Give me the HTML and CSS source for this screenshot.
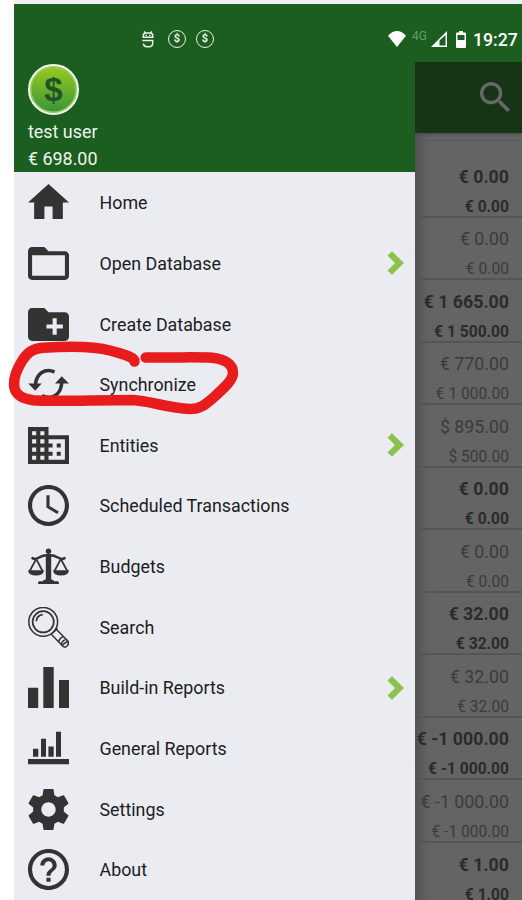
FILE: index.html
```html
<!DOCTYPE html>
<html lang="en">
<head>
<meta charset="utf-8">
<title>Accounts</title>
<link rel="stylesheet" href="styles.css">
</head>
<body>
<div class="screen">
  <div class="statusbar">
    <div class="notices">
      <svg class="notice-face" viewBox="0 0 12 17"><path d="M2 .5l1.500 1.500M10 .5L8.500 2M1.300 6.200V4.500Q1.300 2 4 2h4q2.700 0 2.700 2.500v1.700M.3 6.300h11.400M.3 9.500h10.400v2.500q0 3.700-3.700 3.700H5q-3.300 0-3.700-3" fill="none" stroke="#e9f2e9" stroke-width="1.500"/><path d="M3.500 3.800h1.500v1.300H3.500zM7 3.800h1.500v1.300H7z" fill="#e9f2e9"/></svg>
      <span class="coin">$</span>
      <span class="coin">$</span>
    </div>
    <svg class="wifi" viewBox="0 0 18 16"><path d="M9 16L0 4.800Q4 0 9 0t9 4.800z" fill="#fff"/></svg>
    <span class="net">4G</span>
    <svg class="signal" viewBox="0 0 16 16"><path fill-rule="evenodd" d="M16 0v16H0zM14.500 4L8.500 9.500v5h6z" fill="#fff"/></svg>
    <svg class="battery" viewBox="0 0 10 17"><path fill-rule="evenodd" d="M3 0h4v1.500h2q1 0 1 1V16q0 1-1 1H1q-1 0-1-1V2.500q0-1 1-1h2zM1.500 4v5h7V4z" fill="#fff"/></svg>
    <span class="time">19:27</span>
  </div>
  <div class="body">
    <nav class="drawer">
      <header class="profile">
        <div class="avatar"><span>$</span></div>
        <div class="name">test user</div>
        <div class="total">€ 698.00</div>
      </header>
      <ul class="menu">
        <li><svg class="icon" viewBox="2 2 20 20"><path d="M10 20v-6h4v6h5v-8h3L12 3 2 12h3v8z"/></svg><span>Home</span></li>
        <li><svg class="icon" viewBox="2 2 20 20"><path d="M20 6h-8l-2-2H4c-1.100 0-1.990.900-1.990 2L2 18c0 1.100.900 2 2 2h16c1.100 0 2-.900 2-2V8c0-1.100-.900-2-2-2zm0 12H4V8h16v10z"/></svg><span>Open Database</span><svg class="chevron" viewBox="0 0 17 24"><path d="M.5 4.500L5 .2 17 12 5 23.800.5 19.500 8 12z"/></svg></li>
        <li><svg class="icon" viewBox="2 2 20 20"><path d="M20 6h-8l-2-2H4c-1.110 0-1.990.890-1.990 2L2 18c0 1.110.890 2 2 2h16c1.110 0 2-.890 2-2V8c0-1.110-.890-2-2-2zm-1 8h-3v3h-2v-3h-3v-2h3V9h2v3h3v2z"/></svg><span>Create Database</span></li>
        <li><svg class="icon" viewBox="0 0 41 41"><path d="M26.500 8C17 3.500 8.500 10 7.500 20M14 31.500C24 37 33 30 33.700 19" fill="none" stroke="#333" stroke-width="3.600"/><path d="M.3 19.600h13.400L7.200 26.800zM27 19.500h14l-7.300-7.200z"/></svg><span>Synchronize</span></li>
        <li><svg class="icon" viewBox="2 2 20 20"><path d="M12 7V3H2v18h20V7H12zM6 19H4v-2h2v2zm0-4H4v-2h2v2zm0-4H4V9h2v2zm0-4H4V5h2v2zm4 12H8v-2h2v2zm0-4H8v-2h2v2zm0-4H8V9h2v2zm0-4H8V5h2v2zm10 12h-8v-2h2v-2h-2v-2h2v-2h-2V9h8v10zm-2-8h-2v2h2v-2zm0 4h-2v2h2v-2z"/></svg><span>Entities</span><svg class="chevron" viewBox="0 0 17 24"><path d="M.5 4.500L5 .2 17 12 5 23.800.5 19.500 8 12z"/></svg></li>
        <li><svg class="icon" viewBox="2 2 20 20"><path d="M11.990 2C6.470 2 2 6.480 2 12s4.470 10 9.990 10C17.520 22 22 17.520 22 12S17.520 2 11.990 2zM12 20c-4.420 0-8-3.580-8-8s3.580-8 8-8 8 3.580 8 8-3.580 8-8 8zm.5-13H11v6l5.250 3.150.75-1.230-4.500-2.670z"/></svg><span>Scheduled Transactions</span></li>
        <li><svg class="icon" viewBox="0 0 41 41"><circle cx="20.500" cy="5.300" r="2.700"/><path d="M17.800 8h5.400v25.500q2.500.3 3 1.800H30q1 0 1 2.700H10q0-2.700 1-2.700h3.800q.5-1.500 3-1.800zM0 24.300h16q-.5 5.200-8 5.200t-8-5.200zM25 24.300h16q-.5 5.200-8 5.200t-8-5.200z"/><path d="M4.500 12.200Q7 13.800 10 12q5-3 10.500-3T31 12q3 1.800 5.500.2" fill="none" stroke="#333" stroke-width="2.600" stroke-linecap="round"/><path d="M8.200 13L1.700 25M8.200 13l6.300 12M32.800 13l-6.300 12M32.800 13l6.500 12" fill="none" stroke="#333" stroke-width="1.700"/></svg><span>Budgets</span></li>
        <li><svg class="icon" viewBox="0 0 41 41"><g fill="none" stroke="#333" stroke-width="1.500"><circle cx="15.200" cy="14.800" r="14.400"/><circle cx="15.200" cy="14.800" r="10.600" stroke-width="1.700"/><path d="M8.300 14.300q.5-6 6.500-6.600" stroke-width="1.800"/><path d="M23.300 27.200l3-2.700M27.500 23.500l2-2.200M23.300 27.200L35 39.500q2 1.500 4-.5t1.200-4.500L28.500 22.500M26.300 24.500l1.800-1.600M31 34.500q.3-3.600 4.500-5M33.500 37.200q.5-3.700 4.500-5M34.500 39q1-3 5.500-4.500"/></g></svg><span>Search</span></li>
        <li><svg class="icon" viewBox="0 0 41 41"><path d="M0 20.800h10.200V41H0zM15.300 0h10.400v41H15.300zM31 13h10v28H31z"/></svg><span>Build-in Reports</span><svg class="chevron" viewBox="0 0 17 24"><path d="M.5 4.500L5 .2 17 12 5 23.800.5 19.500 8 12z"/></svg></li>
        <li><svg class="icon" viewBox="0 0 41 41"><path d="M0 31h41v5.300H0zM5 20.700h5.300v8H5zM13 10.700h5v18h-5zM20.400 18.500h5.300v10.200h-5.300zM28 3.700h5v25h-5z"/></svg><span>General Reports</span></li>
        <li><svg class="icon" viewBox="2 2 20 20"><path d="M19.430 12.980c.04-.32.07-.64.07-.98s-.03-.66-.07-.98l2.110-1.650c.19-.15.24-.42.12-.64l-2-3.460c-.12-.22-.39-.3-.61-.22l-2.490 1c-.52-.4-1.080-.73-1.690-.98l-.38-2.650C14.460 2.180 14.250 2 14 2h-4c-.25 0-.46.18-.49.42l-.38 2.650c-.61.25-1.170.59-1.690.98l-2.490-1c-.23-.09-.49 0-.61.22l-2 3.460c-.13.22-.07.49.12.64l2.110 1.650c-.04.32-.07.65-.07.98s.03.66.07.98l-2.110 1.650c-.19.15-.24.42-.12.64l2 3.460c.12.22.39.3.61.22l2.490-1c.52.4 1.080.73 1.690.98l.38 2.650c.03.24.24.42.49.42h4c.25 0 .46-.18.49-.42l.38-2.650c.61-.25 1.170-.59 1.690-.98l2.490 1c.23.09.49 0 .61-.22l2-3.460c.12-.22.07-.49-.12-.64l-2.110-1.650zM12 15.500c-1.930 0-3.500-1.570-3.500-3.500s1.570-3.500 3.500-3.500 3.500 1.570 3.500 3.500-1.570 3.500-3.500 3.500z"/></svg><span>Settings</span></li>
        <li><svg class="icon" viewBox="2 2 20 20"><path d="M11 18h2v-2h-2v2zm1-16C6.480 2 2 6.480 2 12s4.480 10 10 10 10-4.480 10-10S17.520 2 12 2zm0 18c-4.410 0-8-3.590-8-8s3.590-8 8-8 8 3.590 8 8-3.590 8-8 8zm0-14c-2.210 0-4 1.790-4 4h2c0-1.100.9-2 2-2s2 .9 2 2c0 2-3 1.750-3 5h2c0-2.250 3-2.500 3-5 0-2.210-1.790-4-4-4z"/></svg><span>About</span></li>
      </ul>
    </nav>
    <main class="accounts">
      <div class="toolbar"><svg viewBox="3 3 17.500 17.500"><path d="M15.500 14h-.79l-.28-.27C15.410 12.590 16 11.110 16 9.500 16 5.910 13.090 3 9.500 3S3 5.910 3 9.500 5.910 16 9.500 16c1.610 0 3.090-.59 4.230-1.570l.27.28v.79l5 4.990L20.490 19l-4.990-5zm-6 0C7.010 14 5 11.990 5 9.500S7.010 5 9.500 5 14 7.010 14 9.500 11.990 14 9.500 14z"/></svg></div>
      <div class="spacer"></div>
      <div class="row strong"><b>€ 0.00</b><i>€ 0.00</i></div>
      <div class="row"><b>€ 0.00</b><i>€ 0.00</i></div>
      <div class="row strong"><b>€ 1 665.00</b><i>€ 1 500.00</i></div>
      <div class="row"><b>€ 770.00</b><i>€ 1 000.00</i></div>
      <div class="row"><b>$ 895.00</b><i>$ 500.00</i></div>
      <div class="row strong"><b>€ 0.00</b><i>€ 0.00</i></div>
      <div class="row"><b>€ 0.00</b><i>€ 0.00</i></div>
      <div class="row strong"><b>€ 32.00</b><i>€ 32.00</i></div>
      <div class="row"><b>€ 32.00</b><i>€ 32.00</i></div>
      <div class="row strong"><b>€ -1 000.00</b><i>€ -1 000.00</i></div>
      <div class="row"><b>€ -1 000.00</b><i>€ -1 000.00</i></div>
      <div class="row strong"><b>€ 1.00</b><i>€ 1.00</i></div>
    </main>
  </div>
</div>
<svg class="marker" viewBox="0 335 250 90"><path d="M134.500 361.500C135 358 127 355 110 350.500C94 346 70 346 43 347.700C32 348.500 27 353 22 361C17 369 14 376 14 384C14 392 18 398 33 400.200C50 402 95 400 133 400C150 401 168 408 190 409C200 409 205 405 213 398C225 387 233 380 233 373C233 364 224 359 212 357.800C204 357 190 357.500 145.700 357.500"/></svg>
</body>
</html>
```

FILE: styles.css
```css
* { box-sizing: border-box; }
body {
  margin: 0;
  height: 900px;
  overflow: hidden;
  position: relative;
  background: #fff;
  font-family: Roboto, "Liberation Sans", sans-serif;
}
svg { display: block; flex: none; }
.screen {
  height: 900px;
  margin-left: 14px;
  border-top: 4px solid #eff0f4;
  display: flex;
  flex-direction: column;
}
.statusbar {
  height: 58px;
  flex: none;
  background: #1b5e20;
  color: #fff;
  display: flex;
  align-items: center;
  padding: 12px 4px 0 128px;
}
.notices { display: flex; align-items: center; flex: 1; }
.notice-face { width: 12px; height: 17px; margin-right: 14px; }
.coin {
  width: 18px;
  height: 18px;
  margin-right: 10px;
  border: 1.500px solid #e9f2e9;
  border-radius: 50%;
  color: #e9f2e9;
  font-size: 11px;
  font-weight: 700;
  line-height: 16px;
  text-align: center;
}
.wifi { width: 18px; height: 16px; margin-right: 6px; }
.net { font-size: 12px; line-height: 12px; color: #6b9a6e; margin: -7px 3px 0 0; width: 16px; }
.signal { width: 16px; height: 16px; margin-right: 9px; }
.battery { width: 10px; height: 17px; margin-right: 7px; }
.time { font-size: 17.700px; font-weight: 500; width: 45px; white-space: nowrap; margin-top: 1px; }
.body { flex: 1; min-height: 0; display: flex; overflow: hidden; }
.drawer { width: 401px; flex: none; background: #ebecf2; }
.profile {
  height: 110px;
  padding: 2px 14px 0;
  background: #1b5e20;
  color: #eff5ef;
  font-size: 17.900px;
}
.avatar {
  width: 51px;
  height: 51px;
  border: 2px solid #f1f7ec;
  border-radius: 50%;
  background: linear-gradient(#98cc20, #39933a);
  box-shadow: inset 0 0 0 1.500px #9aca60;
  display: flex;
  align-items: center;
  justify-content: center;
  color: #225326;
  font: bold 33px/40px "Liberation Sans", sans-serif;
}
.name, .total { line-height: 27px; }
.name { margin-top: 3px; }
.menu { list-style: none; margin: 0; padding: .5px 0 0; }
.menu li {
  height: 60.640px;
  padding: 0 11px 0 14px;
  display: flex;
  align-items: center;
  font-size: 17.850px;
  color: #1d1d1d;
}
.menu span { flex: 1; margin-left: 30.500px; white-space: nowrap; }
.icon { width: 41px; height: 41px; fill: #333; }
.chevron { width: 17px; height: 24px; fill: #8bc34a; }
.accounts {
  flex: 1;
  min-width: 0;
  background: linear-gradient(90deg, #525252, #626262 12px, #646464 24px);
  color: #3b3b3b;
}
.toolbar {
  height: 71px;
  padding: 20px 12px 0 0;
  display: flex;
  justify-content: flex-end;
  background: #163516;
  box-shadow: 0 1px 3px #444;
}
.toolbar svg { width: 30px; height: 30px; fill: #686868; }
.spacer { height: 22px; border-top: 7px solid transparent; box-shadow: inset 0 1px #595959; }
.row {
  height: 62.550px;
  padding: 5.500px 13px 0 0;
  border-bottom: 2px solid #555;
  display: flex;
  flex-direction: column;
  align-items: flex-end;
  white-space: nowrap;
}
.row b, .row i { font-style: normal; font-weight: 400; flex: none; }
.row b { font-size: 17.800px; line-height: 32px; }
.row i { font-size: 15.600px; line-height: 29px; }
.strong { color: #2b2b2b; }
.row.strong b, .row.strong i { font-weight: 700; }
.marker { position: absolute; left: 0; top: 335px; width: 250px; height: 90px; }
.marker path {
  fill: none;
  stroke: #e81c1c;
  stroke-width: 10.500px;
  stroke-linecap: round;
  stroke-linejoin: round;
}
```
